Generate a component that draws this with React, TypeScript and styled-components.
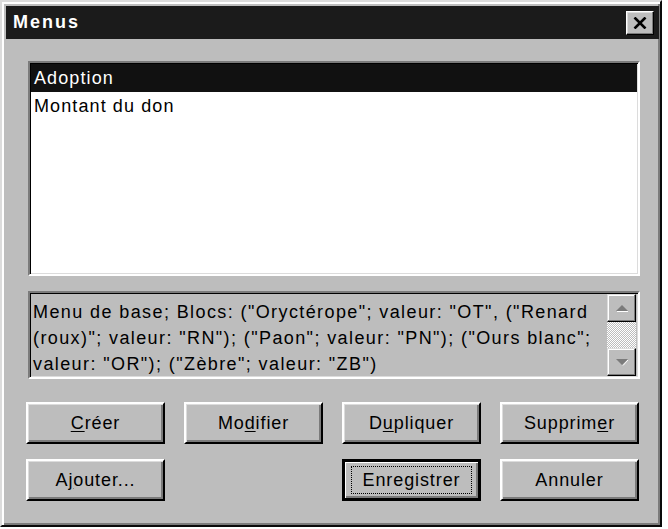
import React from "react";
import styled, { createGlobalStyle } from "styled-components";

const GlobalStyle = createGlobalStyle`
  html, body {
    margin: 0;
    padding: 0;
    background: #ffffff;
  }
  body {
    font-family: "Liberation Sans", Arial, sans-serif;
  }
`;

const Janela = styled.div`
  width: 662px;
  height: 527px;
  box-sizing: border-box;
  background: #bdbdbd;
  border: 2px solid;
  border-color: #dcdcdc #0a0a0a #0a0a0a #dcdcdc;
  box-shadow: inset 2px 2px #ffffff, inset -2px -2px #7b7b7b;
  padding: 4px 1px 0 4px;
  display: flex;
  flex-direction: column;
`;

const BarraTitulo = styled.div`
  height: 33px;
  background: #1b1b1b;
  display: flex;
  align-items: center;
  justify-content: space-between;
  padding: 0 5px 0 7px;
`;

const Titulo = styled.span`
  color: #ffffff;
  font-weight: 700;
  font-size: 18px;
  letter-spacing: 2px;
`;

const BotaoFechar = styled.button`
  width: 28px;
  height: 24px;
  padding: 0;
  margin: 0;
  background: #bdbdbd;
  border: 1px solid;
  border-color: #ffffff #000000 #000000 #ffffff;
  box-shadow: inset -1px -1px #7b7b7b, inset 1px 1px #dcdcdc;
  display: flex;
  align-items: center;
  justify-content: center;
`;

const Conteudo = styled.div`
  padding: 22px 19px 0 22px;
  display: flex;
  flex-direction: column;
`;

const Afundado = styled.div`
  box-sizing: border-box;
  border: 2px solid;
  border-color: #7b7b7b #ffffff #ffffff #7b7b7b;
  box-shadow: inset 1px 1px #000000, inset -1px -1px #dcdcdc;
  padding: 1px;
`;

const Lista = styled(Afundado)`
  height: 215px;
  background: #ffffff;
`;

const Item = styled.div<{ $selecionado?: boolean }>`
  height: 28px;
  line-height: 29px;
  padding-left: 3px;
  font-size: 18px;
  letter-spacing: 1.1px;
  background: ${(p) => (p.$selecionado ? "#111111" : "transparent")};
  color: ${(p) => (p.$selecionado ? "#ffffff" : "#000000")};
`;

const Descricao = styled(Afundado)`
  margin-top: 15px;
  height: 88px;
  background: #bdbdbd;
  display: flex;
`;

const TextoDescricao = styled.div`
  flex: 1;
  padding: 5px 0 0 2px;
  font-size: 18px;
  line-height: 26px;
  letter-spacing: 1.4px;
  color: #000000;
`;

const Linha = styled.div`
  white-space: nowrap;
`;

const BarraRolagem = styled.div`
  width: 29px;
  margin-right: 1px;
  display: flex;
  flex-direction: column;
  background: repeating-conic-gradient(#ffffff 0 25%, #bdbdbd 0 50%) 0 0 / 2px 2px;
`;

const BotaoRolagem = styled.div`
  height: 28px;
  box-sizing: border-box;
  background: #bdbdbd;
  border: 1px solid;
  border-color: #dcdcdc #000000 #000000 #dcdcdc;
  box-shadow: inset -1px -1px #7b7b7b, inset 1px 1px #ffffff;
  display: flex;
  align-items: center;
  justify-content: center;
`;

const Trilho = styled.div`
  flex: 1;
`;

const GradeBotoes = styled.div`
  margin: 23px 1px 0 -2px;
  display: grid;
  grid-template-columns: repeat(4, 139px);
  grid-auto-rows: 42px;
  justify-content: space-between;
  row-gap: 15px;
`;

const Botao = styled.button<{ $coluna: number; $padrao?: boolean }>`
  grid-column: ${(p) => p.$coluna};
  box-sizing: border-box;
  margin: 0;
  padding: 0;
  background: #bdbdbd;
  font-family: "Liberation Sans", Arial, sans-serif;
  font-size: 18px;
  letter-spacing: 0.9px;
  color: #000000;
  border: ${(p) => (p.$padrao ? "3px" : "2px")} solid;
  border-color: ${(p) =>
    p.$padrao ? "#000000" : "#ffffff #000000 #000000 #ffffff"};
  box-shadow: ${(p) =>
    p.$padrao
      ? "inset 1px 1px #ffffff, inset -2px -2px #7b7b7b"
      : "inset 1px 1px #dcdcdc, inset -2px -2px #7b7b7b"};
  display: flex;
  align-items: center;
  justify-content: center;
`;

const Foco = styled.span`
  box-sizing: border-box;
  width: 121px;
  height: 28px;
  border: 1px dotted #000000;
  display: flex;
  align-items: center;
  justify-content: center;
`;

const Atalho = styled.span`
  text-decoration: underline;
  text-underline-offset: 2px;
`;

const SetaCima = () => (
  <svg width="12" height="7" viewBox="0 0 12 7">
    <polygon points="6,0 0,6 12,6" fill="#7b7b7b" />
    <line x1="1" y1="6.5" x2="12" y2="6.5" stroke="#ffffff" strokeWidth="1" />
  </svg>
);

const SetaBaixo = () => (
  <svg width="12" height="7" viewBox="0 0 12 7">
    <polygon points="0,0 12,0 6,6" fill="#7b7b7b" />
    <line x1="7" y1="6.5" x2="12" y2="1" stroke="#ffffff" strokeWidth="1" />
  </svg>
);

const IconeFechar = () => (
  <svg width="14" height="12" viewBox="0 0 14 12">
    <path d="M1.5 0.5 L12.5 11.5 M12.5 0.5 L1.5 11.5" stroke="#000000" strokeWidth="2.6" />
  </svg>
);

const App = () => {
  return (
    <>
      <GlobalStyle />
      <Janela>
        <BarraTitulo>
          <Titulo>Menus</Titulo>
          <BotaoFechar aria-label="Fermer">
            <IconeFechar />
          </BotaoFechar>
        </BarraTitulo>
        <Conteudo>
          <Lista>
            <Item $selecionado>Adoption</Item>
            <Item>Montant du don</Item>
          </Lista>
          <Descricao>
            <TextoDescricao>
              <Linha>Menu de base; Blocs: ("Oryctérope"; valeur: "OT", ("Renard</Linha>
              <Linha>(roux)"; valeur: "RN"); ("Paon"; valeur: "PN"); ("Ours blanc";</Linha>
              <Linha>valeur: "OR"); ("Zèbre"; valeur: "ZB")</Linha>
            </TextoDescricao>
            <BarraRolagem>
              <BotaoRolagem>
                <SetaCima />
              </BotaoRolagem>
              <Trilho />
              <BotaoRolagem>
                <SetaBaixo />
              </BotaoRolagem>
            </BarraRolagem>
          </Descricao>
          <GradeBotoes>
            <Botao $coluna={1}>
              <span>
                <Atalho>C</Atalho>réer
              </span>
            </Botao>
            <Botao $coluna={2}>
              <span>
                Mo<Atalho>d</Atalho>ifier
              </span>
            </Botao>
            <Botao $coluna={3}>
              <span>
                D<Atalho>u</Atalho>pliquer
              </span>
            </Botao>
            <Botao $coluna={4}>
              <span>
                Supprim<Atalho>e</Atalho>r
              </span>
            </Botao>
            <Botao $coluna={1}>
              <span>
                A<Atalho>j</Atalho>outer...
              </span>
            </Botao>
            <Botao $coluna={3} $padrao>
              <Foco>Enregistrer</Foco>
            </Botao>
            <Botao $coluna={4}>Annuler</Botao>
          </GradeBotoes>
        </Conteudo>
      </Janela>
    </>
  );
};

export default App;
